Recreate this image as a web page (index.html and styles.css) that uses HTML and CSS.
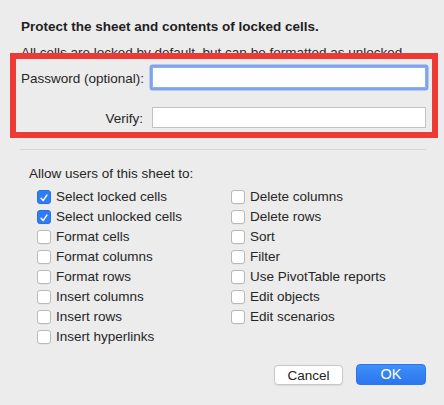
FILE: index.html
```html
<!DOCTYPE html>
<html>
<head>
<meta charset="utf-8">
<link rel="stylesheet" href="styles.css">
</head>
<body>
<div class="dialog">
  <h1 class="title">Protect the sheet and contents of locked cells.</h1>
  <div class="sub-clip"><p class="sub">All cells are locked by default, but can be formatted as unlocked.</p></div>
  <div class="highlight">
    <label class="field-label">Password (optional):</label>
    <div class="input focused"></div>
    <label class="field-label">Verify:</label>
    <div class="input"></div>
  </div>
  <div class="separator"></div>
  <p class="allow">Allow users of this sheet to:</p>
  <div class="options">
    <div class="col">
      <div class="opt"><span class="box checked"><svg viewBox="0 0 14 14" width="14" height="14"><path d="M3.6 7.4 L6 10 L10.4 3.6" fill="none" stroke="#fff" stroke-width="1.7" stroke-linecap="round" stroke-linejoin="round"/></svg></span>Select locked cells</div>
      <div class="opt"><span class="box checked"><svg viewBox="0 0 14 14" width="14" height="14"><path d="M3.6 7.4 L6 10 L10.4 3.6" fill="none" stroke="#fff" stroke-width="1.7" stroke-linecap="round" stroke-linejoin="round"/></svg></span>Select unlocked cells</div>
      <div class="opt"><span class="box"></span>Format cells</div>
      <div class="opt"><span class="box"></span>Format columns</div>
      <div class="opt"><span class="box"></span>Format rows</div>
      <div class="opt"><span class="box"></span>Insert columns</div>
      <div class="opt"><span class="box"></span>Insert rows</div>
      <div class="opt"><span class="box"></span>Insert hyperlinks</div>
    </div>
    <div class="col">
      <div class="opt"><span class="box"></span>Delete columns</div>
      <div class="opt"><span class="box"></span>Delete rows</div>
      <div class="opt"><span class="box"></span>Sort</div>
      <div class="opt"><span class="box"></span>Filter</div>
      <div class="opt"><span class="box"></span>Use PivotTable reports</div>
      <div class="opt"><span class="box"></span>Edit objects</div>
      <div class="opt"><span class="box"></span>Edit scenarios</div>
    </div>
  </div>
  <div class="buttons">
    <button class="btn cancel">Cancel</button>
    <button class="btn ok">OK</button>
  </div>
</div>
</body>
</html>
```

FILE: styles.css
```css
html, body {
  margin: 0;
  padding: 0;
  background: #ececec;
}
body {
  font-family: "Liberation Sans", Arial, sans-serif;
  font-size: 13.5px;
  color: #232323;
  width: 444px;
  height: 405px;
  overflow: hidden;
}
.dialog {
  padding-top: 19px;
}
.title {
  margin: 0 0 0 21px;
  font-size: 13.5px;
  font-weight: bold;
  line-height: 16px;
  color: #1e1e1e;
}
.sub-clip {
  margin: 10px 0 0 21px;
  height: 8px;
  overflow: hidden;
}
.sub {
  margin: 0;
  line-height: 16px;
  white-space: nowrap;
  color: #2a2a2a;
}
.highlight {
  margin-left: 10px;
  width: 428px;
  height: 85px;
  box-sizing: border-box;
  border: 6px solid #ee3a35;
  padding: 8px 6px 0 5px;
  display: grid;
  grid-template-columns: 122px 1fr;
  grid-template-rows: 21px 21px;
  column-gap: 9px;
  row-gap: 19px;
  align-items: center;
}
.field-label {
  text-align: right;
  white-space: nowrap;
  line-height: 16px;
  padding-top: 2px;
  color: #262626;
}
.input {
  height: 21px;
  box-sizing: border-box;
  background: #fff;
  border: 1px solid #c2c2c2;
}
.input.focused {
  border-color: #8fb0ec;
  box-shadow: 0 0 0 2.5px #7fa4ee;
  border-radius: 1px;
}
.separator {
  margin: 11px 18px 0 20px;
  height: 1px;
  background: #d7d7d7;
}
.allow {
  margin: 16px 0 0 29px;
  line-height: 16px;
  color: #262626;
}
.options {
  margin: 5px 0 0 37px;
  display: grid;
  grid-template-columns: 194px 1fr;
}
.opt {
  display: flex;
  align-items: center;
  height: 20px;
  line-height: 20px;
  white-space: nowrap;
  color: #262626;
}
.box {
  width: 14px;
  height: 14px;
  box-sizing: border-box;
  margin-right: 5px;
  border: 1px solid #b9b9b9;
  border-radius: 3px;
  background: #fff;
  box-shadow: 0 0.5px 0.5px rgba(0,0,0,0.06);
  flex: none;
  display: flex;
}
.box.checked {
  background: #2f7cf6;
  border-color: #2a70e0;
}
.buttons {
  margin: 17px 18px 0 0;
  display: flex;
  justify-content: flex-end;
  align-items: flex-start;
  gap: 13px;
}
.btn {
  font-family: "Liberation Sans", Arial, sans-serif;
  font-size: 13.5px;
  height: 21px;
  padding: 0;
  border-radius: 4px;
  line-height: 19px;
}
.cancel {
  width: 69px;
  margin-top: 1px;
  height: 20px;
  background: #fff;
  border: 1px solid #c8c8c8;
  color: #222;
  box-shadow: 0 0.5px 1px rgba(0,0,0,0.08);
}
.ok {
  width: 70px;
  background: linear-gradient(#3f8ff8, #2b75ee);
  border: 1px solid #2b76ee;
  color: #fff;
  font-size: 14.5px;
}
```
